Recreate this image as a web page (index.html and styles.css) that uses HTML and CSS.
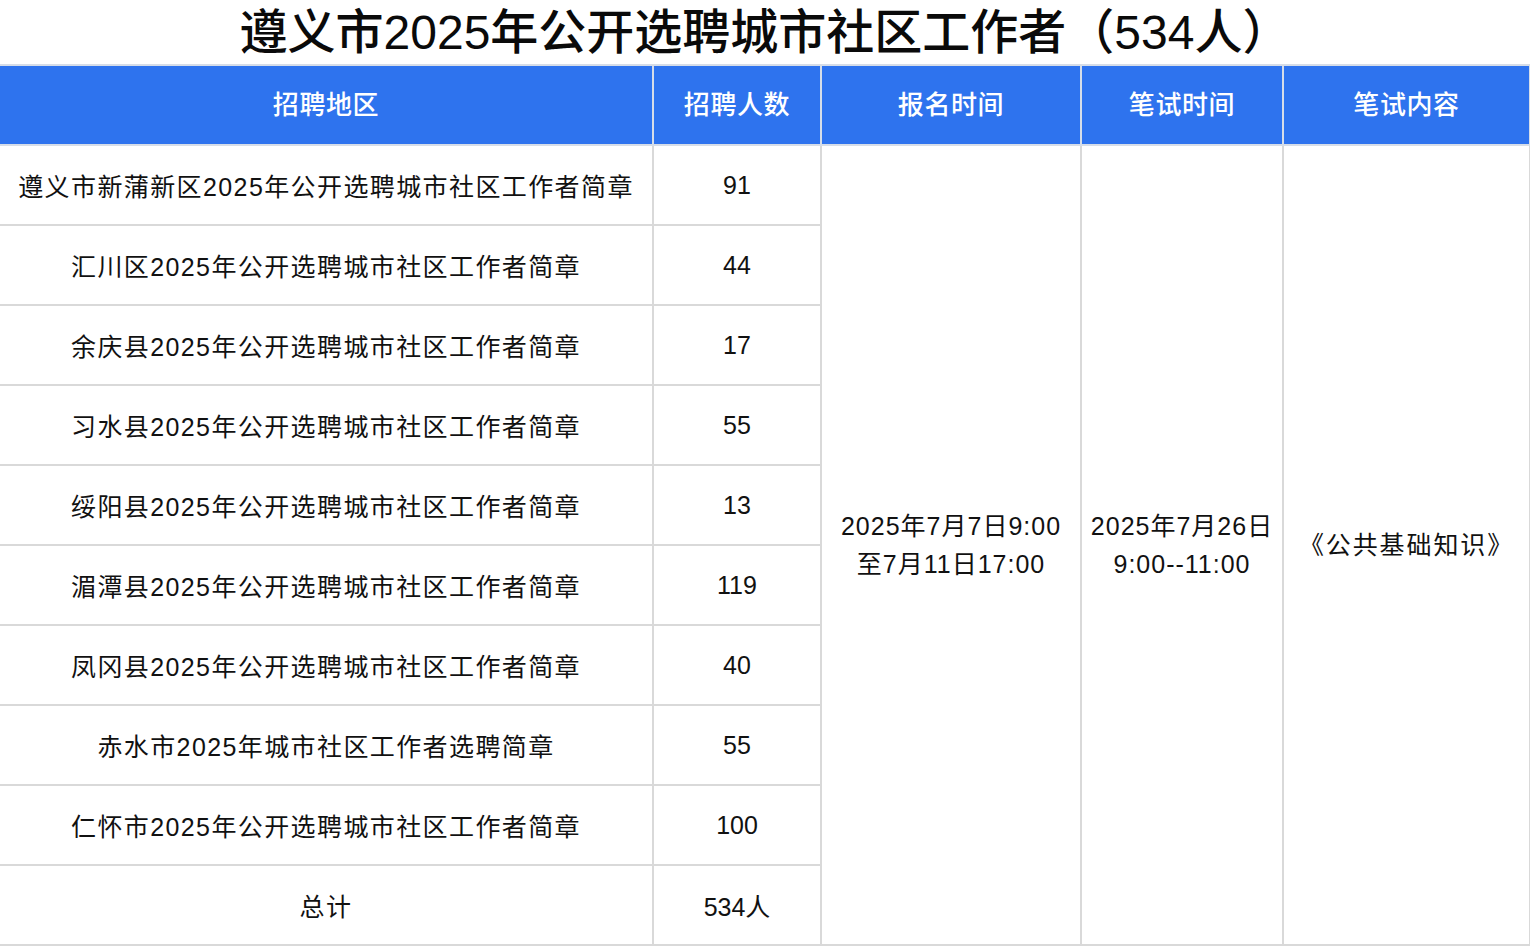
FILE: index.html
```html
<!DOCTYPE html>
<html lang="zh">
<head>
<meta charset="utf-8">
<title>遵义市2025年公开选聘城市社区工作者</title>
<link rel="stylesheet" href="styles.css">
</head>
<body>
<div class="page">
  <h1 class="title">遵义市2025年公开选聘城市社区工作者（534人）</h1>
  <table class="grid">
    <colgroup>
      <col class="c1"><col class="c2"><col class="c3"><col class="c4"><col class="c5">
    </colgroup>
    <thead>
      <tr>
        <th>招聘地区</th>
        <th>招聘人数</th>
        <th>报名时间</th>
        <th>笔试时间</th>
        <th>笔试内容</th>
      </tr>
    </thead>
    <tbody>
      <tr>
        <td class="area">遵义市新蒲新区2025年公开选聘城市社区工作者简章</td>
        <td>91</td>
        <td rowspan="10" class="multi">2025年7月7日9:00<br>至7月11日17:00</td>
        <td rowspan="10" class="multi">2025年7月26日<br>9:00--11:00</td>
        <td rowspan="10" class="multi wide">《公共基础知识》</td>
      </tr>
      <tr><td class="area">汇川区2025年公开选聘城市社区工作者简章</td><td>44</td></tr>
      <tr><td class="area">余庆县2025年公开选聘城市社区工作者简章</td><td>17</td></tr>
      <tr><td class="area">习水县2025年公开选聘城市社区工作者简章</td><td>55</td></tr>
      <tr><td class="area">绥阳县2025年公开选聘城市社区工作者简章</td><td>13</td></tr>
      <tr><td class="area">湄潭县2025年公开选聘城市社区工作者简章</td><td>119</td></tr>
      <tr><td class="area">凤冈县2025年公开选聘城市社区工作者简章</td><td>40</td></tr>
      <tr><td class="area">赤水市2025年城市社区工作者选聘简章</td><td>55</td></tr>
      <tr><td class="area">仁怀市2025年公开选聘城市社区工作者简章</td><td>100</td></tr>
      <tr><td class="area">总计</td><td>534人</td></tr>
    </tbody>
  </table>
</div>
</body>
</html>
```
FILE: styles.css
```css
html, body {
  margin: 0;
  padding: 0;
  background: #ffffff;
}
body {
  font-family: "Liberation Sans", "Noto Sans CJK SC", sans-serif;
  color: #111111;
}
.page {
  width: 1530px;
}
.title {
  margin: 0;
  height: 64px;
  line-height: 66px;
  font-size: 48px;
  font-weight: 500;
  text-align: center;
  color: #0a0a0a;
}
.grid {
  width: 1530px;
  border-collapse: collapse;
  table-layout: fixed;
}
.c1 { width: 653px; }
.c2 { width: 168px; }
.c3 { width: 260px; }
.c4 { width: 202px; }
.c5 { width: 247px; }
.grid th,
.grid td {
  border: 2px solid #d9d9d9;
  padding: 0;
  text-align: center;
  vertical-align: middle;
}
.grid tr > :first-child {
  border-left: none;
}
.grid th {
  background: #2e73ee;
  color: #ffffff;
  font-size: 26px;
  font-weight: 500;
  letter-spacing: 0.6px;
  height: 78px;
  line-height: 74px;
  border-color: #d6dde8;
}
.grid td {
  height: 78px;
  font-size: 25px;
  font-weight: 400;
}
.grid td.area {
  letter-spacing: 1.4px;
}
.grid td.multi {
  line-height: 38px;
  letter-spacing: 1px;
}
.grid td.wide {
  letter-spacing: 1.9px;
}
```
